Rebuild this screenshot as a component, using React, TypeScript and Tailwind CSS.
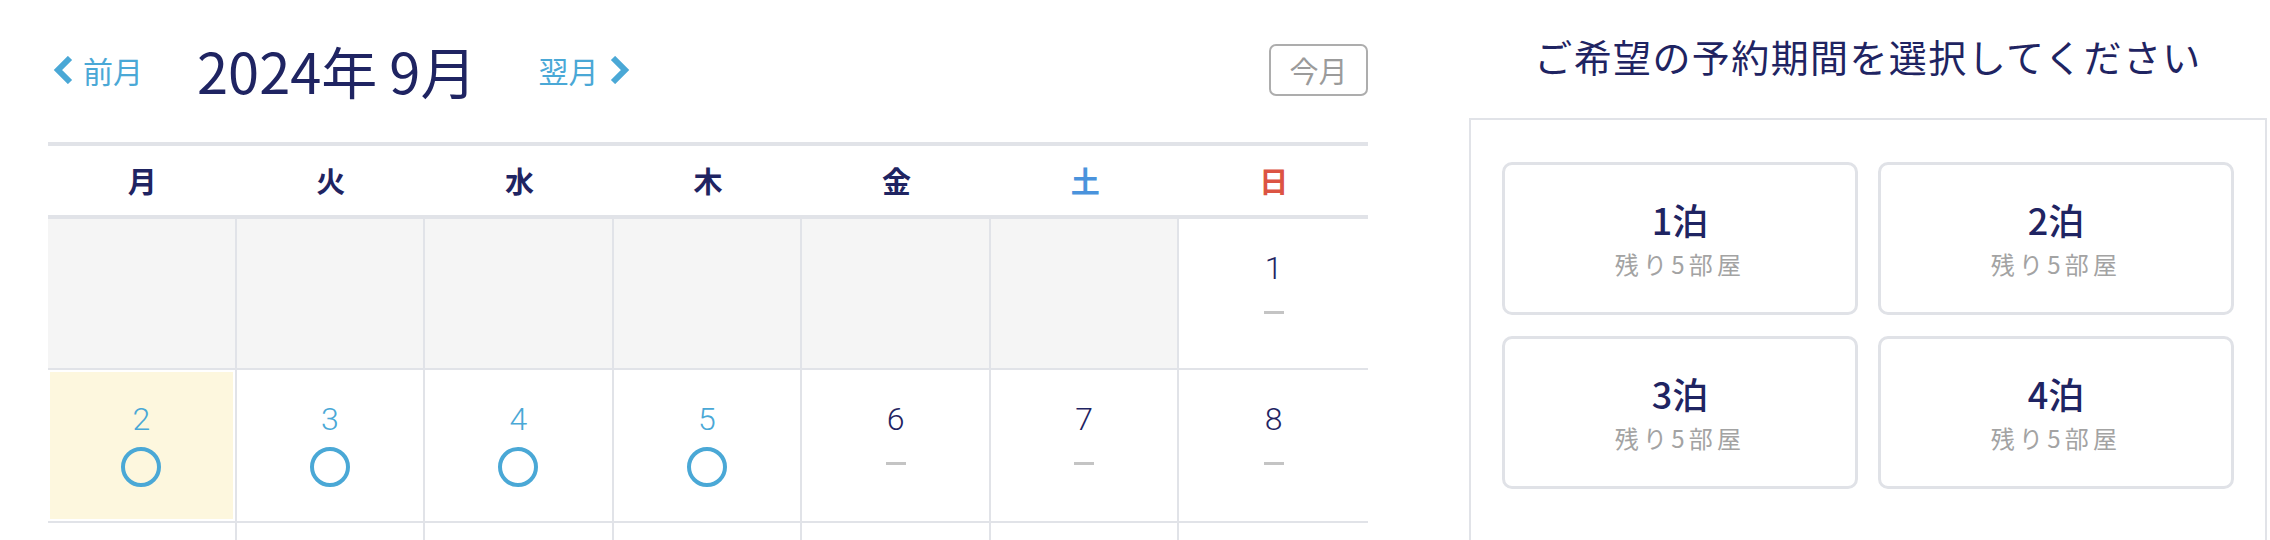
import React from "react";

type Cell = {
  day?: number;
  open?: boolean;
  selected?: boolean;
  blank?: boolean;
};

const weekdays = [
  { label: "月", color: "text-[#1f2462]" },
  { label: "火", color: "text-[#1f2462]" },
  { label: "水", color: "text-[#1f2462]" },
  { label: "木", color: "text-[#1f2462]" },
  { label: "金", color: "text-[#1f2462]" },
  { label: "土", color: "text-[#4a93dc]" },
  { label: "日", color: "text-[#dc5443]" },
];

const rows: { height: string; cells: Cell[] }[] = [
  {
    height: "h-[151px]",
    cells: [
      { blank: true },
      { blank: true },
      { blank: true },
      { blank: true },
      { blank: true },
      { blank: true },
      { day: 1 },
    ],
  },
  {
    height: "h-[153px]",
    cells: [
      { day: 2, open: true, selected: true },
      { day: 3, open: true },
      { day: 4, open: true },
      { day: 5, open: true },
      { day: 6 },
      { day: 7 },
      { day: 8 },
    ],
  },
  {
    height: "h-[60px]",
    cells: [{}, {}, {}, {}, {}, {}, {}],
  },
];

const stays = ["1泊", "2泊", "3泊", "4泊"];

const Chevron = ({ dir }: { dir: "left" | "right" }) => (
  <svg width="20" height="28" viewBox="0 0 20 28" className="shrink-0">
    <polyline
      points={dir === "left" ? "17,2 5,14 17,26" : "3,2 15,14 3,26"}
      fill="none"
      stroke="#4aa8d6"
      strokeWidth="6"
      strokeLinejoin="miter"
    />
  </svg>
);

const DayCell = ({ cell, last }: { cell: Cell; last: boolean }) => {
  const edge = last ? "" : "border-r-2 border-[#e1e3e8]";
  const bg = cell.blank ? "bg-[#f5f5f5]" : "bg-white";
  return (
    <div className={`${edge} ${bg} h-full p-[2px]`}>
      <div
        className={`h-full flex flex-col items-center pt-[31px] ${
          cell.selected ? "bg-[#fdf7de]" : ""
        }`}
      >
        {cell.day !== undefined && (
          <>
            <span
              className={`font-['Roboto',sans-serif] font-light text-[32px] leading-[32px] ${
                cell.open ? "text-[#4aa8d6]" : "text-[#1f2462]"
              }`}
            >
              {cell.day}
            </span>
            {cell.open ? (
              <div className="mt-[12px] w-[40px] h-[40px] rounded-full border-[4px] border-[#4aa8d6]" />
            ) : (
              <div className="mt-[27px] w-[20px] h-[3px] bg-[#c4c4c4]" />
            )}
          </>
        )}
      </div>
    </div>
  );
};

export default function App() {
  return (
    <div className="w-[2270px] h-[540px] overflow-hidden bg-white flex font-['Noto_Sans_CJK_JP','Noto_Sans',sans-serif] text-[#1f2462]">
      <section className="ml-[48px] w-[1320px] flex flex-col shrink-0">
        <header className="mt-[44px] h-[52px] flex items-center">
          <button className="ml-[5px] flex items-center gap-[10px] text-[30px] leading-none text-[#4aa8d6]">
            <Chevron dir="left" />
            前月
          </button>
          <h1 className="ml-[54px] text-[56px] font-normal leading-none">
            2024年<span className="ml-[12px]">9</span>月
          </h1>
          <button className="ml-[62px] flex items-center gap-[12px] text-[30px] leading-none text-[#4aa8d6]">
            翌月
            <Chevron dir="right" />
          </button>
          <button className="ml-auto w-[99px] h-[52px] border-2 border-[#adadad] rounded-[7px] text-[29px] leading-none text-[#9b9b9b]">
            今月
          </button>
        </header>

        <div className="mt-[46px] border-t-4 border-[#e1e3e8]">
          <div className="grid grid-cols-7 h-[73px] border-b-4 border-[#e1e3e8]">
            {weekdays.map((w) => (
              <div
                key={w.label}
                className={`flex items-center justify-center text-[29px] font-bold ${w.color}`}
              >
                {w.label}
              </div>
            ))}
          </div>
          {rows.map((row, i) => (
            <div
              key={i}
              className={`grid grid-cols-7 ${row.height} ${
                i < 2 ? "border-b-2 border-[#e1e3e8]" : ""
              }`}
            >
              {row.cells.map((c, j) => (
                <DayCell key={j} cell={c} last={j === 6} />
              ))}
            </div>
          ))}
        </div>
      </section>

      <aside className="ml-[101px] w-[798px] shrink-0 pt-[33px] flex flex-col">
        <h2 className="text-center text-[38px] leading-[46px] tracking-[1.4px]">
          ご希望の予約期間を選択してください
        </h2>
        <div className="mt-[39px] flex-1 border-2 border-b-0 border-[#e1e3e8] px-[31px] pt-[42px]">
          <div className="grid grid-cols-2 gap-x-[20px] gap-y-[21px]">
            {stays.map((s) => (
              <div
                key={s}
                className="h-[153px] rounded-[10px] border-[3px] border-[#e0e2e7] flex flex-col items-center justify-center gap-[11px]"
              >
                <span className="text-[36px] leading-[40px] font-medium">{s}</span>
                <span className="text-[24px] leading-[28px] tracking-[4.2px] text-[#a3a3a3]">
                  残り5部屋
                </span>
              </div>
            ))}
          </div>
        </div>
      </aside>
    </div>
  );
}
